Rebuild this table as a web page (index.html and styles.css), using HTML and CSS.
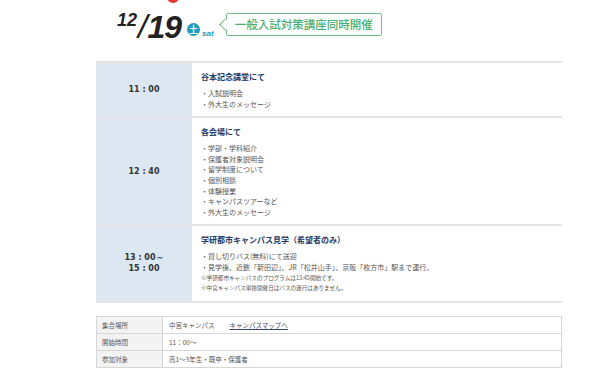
FILE: index.html
```html
<!DOCTYPE html>
<html lang="ja">
<head>
<meta charset="utf-8">
<link rel="stylesheet" href="styles.css">
</head>
<body>
<div class="page">
  <div class="deco"></div>
  <header class="head">
    <div class="date"><span class="month">12</span><span class="slash">/</span><span class="day">19</span></div>
    <span class="dow">土</span><span class="sat">sat</span>
    <div class="bubble">一般入試対策講座同時開催</div>
  </header>
  <table class="sched">
    <tr class="r1">
      <th>11 : 00</th>
      <td>
        <p class="ttl">谷本記念講堂にて</p>
        <ul>
          <li>・入試説明会</li>
          <li>・外大生のメッセージ</li>
        </ul>
      </td>
    </tr>
    <tr class="r2">
      <th>12 : 40</th>
      <td>
        <p class="ttl">各会場にて</p>
        <ul>
          <li>・学部・学科紹介</li>
          <li>・保護者対象説明会</li>
          <li>・留学制度について</li>
          <li>・個別相談</li>
          <li>・体験授業</li>
          <li>・キャンパスツアーなど</li>
          <li>・外大生のメッセージ</li>
        </ul>
      </td>
    </tr>
    <tr class="r3">
      <th>13 : 00～<br>15 : 00</th>
      <td>
        <p class="ttl">学研都市キャンパス見学（希望者のみ）</p>
        <ul>
          <li>・貸し切りバス(無料)にて送迎</li>
          <li>・見学後、近鉄「新田辺」、JR「松井山手」、京阪「枚方市」駅まで運行。</li>
        </ul>
        <p class="note">※学研都市キャンパスのプログラムは13:45開始です。</p>
        <p class="note">※中宮キャンパス単独開催日はバスの運行はありません。</p>
      </td>
    </tr>
  </table>
  <table class="info">
    <tr><th>集合場所</th><td>中宮キャンパス<a class="link" href="#">キャンパスマップへ</a></td></tr>
    <tr><th>開始時間</th><td>11：00～</td></tr>
    <tr><th>参加対象</th><td>高1～3年生・既卒・保護者</td></tr>
  </table>
</div>
</body>
</html>
```

FILE: styles.css
```css
body {
  margin: 0;
  background: #fff;
  font-family: "Noto Sans CJK JP", "Noto Sans", sans-serif;
  color: #555;
}
.page {
  position: relative;
  width: 466px;
  padding-left: 96px;
}
.deco {
  position: absolute;
  left: 167px;
  top: -9px;
  width: 12px;
  height: 12px;
  border-radius: 50%;
  background: #e23b34;
}
.head {
  display: flex;
  align-items: flex-start;
  height: 61px;
  box-sizing: border-box;
  padding-top: 11px;
  padding-left: 21px;
}
.date {
  display: flex;
  align-items: flex-start;
  font-family: "Liberation Sans", Arial, sans-serif;
  font-style: italic;
  font-weight: bold;
  color: #222;
}
.month { font-size: 18px; line-height: 1; }
.slash { font-size: 34px; font-weight: normal; line-height: 1; margin-top: -2px; margin-left: 1px; }
.day { font-size: 32px; line-height: 1; letter-spacing: -1px; }
.dow {
  width: 13px;
  height: 13px;
  margin-top: 12px;
  margin-left: 6px;
  border-radius: 50%;
  background: #1b9cc0;
  color: #fff;
  font-size: 9px;
  font-weight: bold;
  line-height: 13px;
  text-align: center;
}
.sat {
  margin-top: 19px;
  margin-left: 2px;
  font-family: "Liberation Sans", Arial, sans-serif;
  font-style: italic;
  font-weight: bold;
  font-size: 8px;
  line-height: 8px;
  color: #1b9cc0;
}
.bubble {
  position: relative;
  margin-left: 12px;
  margin-top: 2px;
  width: 156px;
  height: 23px;
  box-sizing: border-box;
  border: 1.5px solid #6cc08a;
  border-radius: 2px;
  padding-left: 8px;
  font-size: 11.5px;
  line-height: 20px;
  font-weight: 500;
  color: #48b070;
}
.bubble::before {
  content: "";
  position: absolute;
  left: -5.5px;
  top: 6px;
  width: 8px;
  height: 8px;
  background: #fff;
  border-left: 1.5px solid #6cc08a;
  border-bottom: 1.5px solid #6cc08a;
  transform: rotate(45deg);
}
.sched {
  width: 466px;
  border-collapse: collapse;
  border-top: 2px solid #e4e4e4;
}
.sched th {
  width: 96px;
  padding: 0;
  background: #dde7f2;
  font-family: "DejaVu Sans", Verdana, sans-serif;
  font-weight: bold;
  font-size: 8px;
  line-height: 11px;
  color: #333;
  text-align: center;
  vertical-align: middle;
  border-bottom: 2px solid #e4e4e4;
}
.sched td {
  padding: 8px 0 7px 9px;
  vertical-align: top;
  border-bottom: 2px solid #e4e4e4;
}
.ttl {
  margin: 0 0 5px;
  font-size: 8px;
  line-height: 12px;
  font-weight: bold;
  color: #1d3a6a;
}
.sched ul {
  list-style: none;
  margin: 0;
  padding: 0;
  font-size: 7px;
  line-height: 10.6px;
  color: #555;
}
.note {
  margin: 0;
  font-size: 5.6px;
  line-height: 10.5px;
  color: #555;
}
.info {
  margin-top: 13px;
  width: 466px;
  border-collapse: collapse;
  font-size: 6.5px;
  color: #555;
}
.info th, .info td {
  height: 16px;
  padding: 0 6px;
  border: 1px solid #d6d6d6;
  text-align: left;
  font-weight: normal;
}
.info th {
  width: 54px;
  background: #f3f3f3;
  padding-left: 5px;
}
.link {
  margin-left: 15px;
  color: #3b4a6b;
  text-decoration: underline;
}
```
